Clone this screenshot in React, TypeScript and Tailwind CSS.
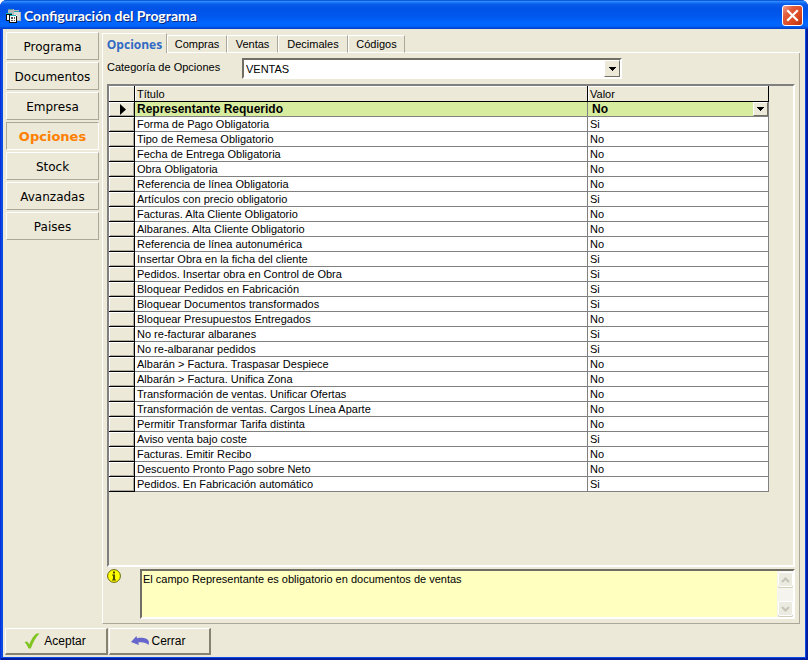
import { useState } from "react";

const sections = ["Programa", "Documentos", "Empresa", "Opciones", "Stock", "Avanzadas", "Paises"];

const tabs = [
  { name: "Opciones", width: "w-[65px]" },
  { name: "Compras", width: "w-[60px]" },
  { name: "Ventas", width: "w-[51px]" },
  { name: "Decimales", width: "w-[70px]" },
  { name: "Códigos", width: "w-[57px]" },
];

const options = [
  ["Representante Requerido", "No"],
  ["Forma de Pago Obligatoria", "Si"],
  ["Tipo de Remesa Obligatorio", "No"],
  ["Fecha de Entrega Obligatoria", "No"],
  ["Obra Obligatoria", "No"],
  ["Referencia de línea Obligatoria", "No"],
  ["Artículos con precio obligatorio", "Si"],
  ["Facturas. Alta Cliente Obligatorio", "No"],
  ["Albaranes. Alta Cliente Obligatorio", "No"],
  ["Referencia de línea autonumérica", "No"],
  ["Insertar Obra en la ficha del cliente", "Si"],
  ["Pedidos. Insertar obra en Control de Obra", "Si"],
  ["Bloquear Pedidos en Fabricación", "Si"],
  ["Bloquear Documentos transformados", "Si"],
  ["Bloquear Presupuestos Entregados", "No"],
  ["No re-facturar albaranes", "Si"],
  ["No re-albaranar pedidos", "Si"],
  ["Albarán > Factura. Traspasar Despiece", "No"],
  ["Albarán > Factura. Unifica Zona", "No"],
  ["Transformación de ventas. Unificar Ofertas", "No"],
  ["Transformación de ventas. Cargos Línea Aparte", "No"],
  ["Permitir Transformar Tarifa distinta", "No"],
  ["Aviso venta bajo coste", "Si"],
  ["Facturas. Emitir Recibo", "No"],
  ["Descuento Pronto Pago sobre Neto", "No"],
  ["Pedidos. En Fabricación automático", "Si"],
];

function TitleBar() {
  return (
    <header className="flex h-[29px] shrink-0 items-center rounded-t-[7px] bg-[linear-gradient(180deg,#0040c8_0%,#2b8cff_5%,#0a5cec_14%,#0053e6_30%,#0057ee_55%,#0066ff_80%,#0064fa_90%,#0046d2_97%,#003dc4_100%)] pt-[2px] pr-[5px] pl-[6px]">
      <svg width="16" height="16" viewBox="0 0 16 16" shapeRendering="crispEdges" aria-hidden="true">
        <path d="M2 1h6v1h5v2h2v9H8L2 8z" fill="#b4b8b8" />
        <path d="M2 1h5v1H2z" fill="#4f9c9c" />
        <path d="M8 3h5v1H8z" fill="#38a0a8" />
        <path d="M8 4h6v8H8z" fill="#d8dcd8" />
        <path d="M1 5h5v2h5v8H4v-2H1z" fill="#fff" />
        <path d="M0 5h6v1H0zM4 7h6v1H4z" fill="#12b8b8" />
        <path d="M0 6h1v7H0zM1 12h3v1H1zM3 7h1v8H3zM4 14h7v1H4zM10 8h1v6h-1zM1 6h5v1H1z" fill="#111" />
        <path d="M5 9h2v2H5zM8 9h1v2H8zM5 12h2v1H5zM8 12h1v1H8z" fill="#555" />
      </svg>
      <h1 className="ml-[2px] flex-1 font-[Lato,sans-serif] text-[14px] leading-4 font-bold text-white [text-shadow:1px_1px_0_#0a2a80]">
        Configuración del Programa
      </h1>
      <button
        type="button"
        aria-label="Cerrar ventana"
        className="flex h-[21px] w-[21px] items-center justify-center rounded-[3px] border border-white bg-[linear-gradient(135deg,#f0a090_0%,#e25c3c_30%,#dc4a20_65%,#b83010_100%)]"
      >
        <svg width="13" height="13" viewBox="0 0 13 13" aria-hidden="true">
          <path d="M2 2l9 9M11 2l-9 9" stroke="#fff" strokeWidth="2.2" strokeLinecap="square" />
        </svg>
      </button>
    </header>
  );
}

function DropArrow() {
  return (
    <svg width="7" height="4" viewBox="0 0 7 4" shapeRendering="crispEdges" aria-hidden="true">
      <path d="M0 0h7v1H0zM1 1h5v1H1zM2 2h3v1H2zM3 3h1v1H3z" fill="#000" />
    </svg>
  );
}

function OptionsTable() {
  return (
    <table className="w-full table-fixed border-separate border-spacing-0 text-left text-[11px] leading-[14px]">
      <colgroup>
        <col className="w-[26px]" />
        <col />
        <col className="w-[181px]" />
      </colgroup>
      <thead>
        <tr className="h-4">
          <th aria-label="Fila" className="border-r border-b border-black p-0 shadow-[inset_1px_1px_0_#fff]" />
          <th className="border-r border-b border-black p-0 pl-[2px] font-normal shadow-[inset_1px_1px_0_#fff]">Título</th>
          <th className="border-r border-b border-black p-0 pl-[2px] font-normal shadow-[inset_1px_1px_0_#fff]">Valor</th>
        </tr>
      </thead>
      <tbody>
        {options.map(([title, value], i) => (
          <tr key={title} className={i === 0 ? "h-[15px] bg-[#d8eca0] text-[12px] font-bold" : "h-[15px] bg-white"}>
            <td className="border-r border-b border-black bg-[#ece9d8] p-0 shadow-[inset_1px_1px_0_#fff,inset_-1px_-1px_0_#aca899]">
              {i === 0 && (
                <svg className="ml-[11px] block" width="6" height="11" viewBox="0 0 6 11" aria-hidden="true">
                  <path d="M0 0l6 5.500L0 11z" fill="#000" />
                </svg>
              )}
            </td>
            <td className="overflow-hidden border-r border-b border-[#808080] p-0 pl-[2px] whitespace-nowrap">{title}</td>
            <td className="border-r border-b border-[#808080] p-0 pl-[2px]">
              {i === 0 ? (
                <div className="relative">
                  <select
                    aria-label={title}
                    defaultValue={value}
                    className="block h-[14px] w-full appearance-none pl-[2px] text-[12px] leading-[14px] font-bold outline-none"
                  >
                    <option>No</option>
                    <option>Si</option>
                  </select>
                  <span className="pointer-events-none absolute top-0 right-0 flex h-[14px] w-[15px] items-center justify-center border border-t-white border-r-[#716f64] border-b-[#716f64] border-l-white bg-[#ece9d8]">
                    <DropArrow />
                  </span>
                </div>
              ) : (
                value
              )}
            </td>
          </tr>
        ))}
      </tbody>
    </table>
  );
}

function ScrollButton({ label, path }: { label: string; path: string }) {
  return (
    <button
      type="button"
      aria-label={label}
      className="flex h-[15px] w-[15px] items-center justify-center rounded-[2px] border border-white bg-[#ecebe2] shadow-[0_1px_0_#cfccb8]"
    >
      <svg width="9" height="6" viewBox="0 0 9 6" fill="none" aria-hidden="true">
        <path d={path} stroke="#c6c4b6" strokeWidth="2" />
      </svg>
    </button>
  );
}

export default function App() {
  const [section, setSection] = useState("Opciones");
  const [tab, setTab] = useState("Opciones");

  return (
    <div className="bg-white font-['Liberation_Sans',Arial,sans-serif] text-[11px] text-black">
      <div className="flex min-h-screen flex-col rounded-t-[7px] bg-[#0a4ae4] shadow-[inset_1px_0_0_#0831d9,inset_-2px_-2px_0_#001da0]">
        <TitleBar />
        <div className="mx-[3px] mb-[3px] flex flex-1 flex-col bg-[#ece9d8]">
          <div className="flex flex-1 pt-[3px] pr-[5px] pl-[3px]">
            <nav className="flex w-[93px] shrink-0 flex-col gap-[2px]">
              {sections.map((name) => (
                <button
                  key={name}
                  type="button"
                  onClick={() => setSection(name)}
                  className={
                    name === section
                      ? "h-[28px] border border-t-[#aca899] border-r-white border-b-white border-l-[#aca899] pt-px font-['DejaVu_Sans',sans-serif] text-[13px] font-bold text-[#ff8000]"
                      : "h-[28px] border border-t-white border-r-[#aca899] border-b-[#aca899] border-l-white pt-px font-['DejaVu_Sans',sans-serif] text-[12px]"
                  }
                >
                  {name}
                </button>
              ))}
            </nav>

            <main className="ml-[3px] flex min-w-0 flex-1 flex-col pt-[1px]">
              <div role="tablist" className="flex h-[20px] items-end">
                {tabs.map((t) => (
                  <button
                    key={t.name}
                    type="button"
                    role="tab"
                    aria-selected={t.name === tab}
                    onClick={() => setTab(t.name)}
                    className={
                      t.name === tab
                        ? `${t.width} h-[20px] border-t border-r border-l border-t-white border-r-[#aca899] border-l-white pt-[2px] font-['Open_Sans',sans-serif] text-[12px] leading-[16px] font-bold text-[#316ac5]`
                        : `${t.width} h-[18px] border-t border-r border-b border-l border-t-white border-r-[#aca899] border-b-white border-l-white pt-px text-[11px] leading-[15px]`
                    }
                  >
                    {t.name}
                  </button>
                ))}
                <div className="h-px flex-1 bg-white" />
              </div>

              <div className="flex flex-1 flex-col border-r border-b border-l border-r-[#aca899] border-b-[#aca899] border-l-white pt-[5px] pr-1 pb-1 pl-1">
                <div className="flex h-[21px]">
                  <label htmlFor="category" className="w-[135px] pt-[2px] leading-[14px]">
                    Categoría de Opciones
                  </label>
                  <div className="relative w-[380px] border-2 border-t-[#716f64] border-r-white border-b-white border-l-[#716f64] bg-white">
                    <select id="category" className="block h-[17px] w-full appearance-none pt-px pl-[2px] text-[11px] leading-[16px] outline-none">
                      <option>VENTAS</option>
                    </select>
                    <span className="pointer-events-none absolute top-0 right-0 flex h-[17px] w-[16px] items-center justify-center border border-t-white border-r-[#716f64] border-b-[#716f64] border-l-white bg-[#ece9d8]">
                      <DropArrow />
                    </span>
                  </div>
                </div>

                <div className="mt-[5px] flex-1 border-2 border-t-[#808080] border-r-white border-b-white border-l-[#808080] pr-[24px]">
                  <OptionsTable />
                </div>

                <div className="mt-[2px] flex h-[50px]">
                  <svg className="shrink-0" width="14" height="14" viewBox="0 0 14 14" role="img" aria-label="Información">
                    <circle cx="7" cy="7" r="6.400" fill="#ff0" stroke="#66660a" />
                    <path d="M6 2.500h2v2H6zM5 5.500h3v5h1v1H5v-1h1v-4H5z" fill="#4a4a00" />
                  </svg>
                  <div className="ml-[19px] flex flex-1 border-2 border-t-[#716f64] border-r-white border-b-white border-l-[#716f64] bg-[#ffffc0]">
                    <textarea
                      readOnly
                      aria-label="Descripción"
                      className="block flex-1 resize-none overflow-hidden pt-px pl-[1px] leading-[14px] outline-none"
                      defaultValue="El campo Representante es obligatorio en documentos de ventas"
                    />
                    <div className="flex w-[16px] flex-col items-center justify-between bg-[#f5f4ef] pt-px pb-px">
                      <ScrollButton label="Subir" path="M1 5l3.500-3.500L8 5" />
                      <ScrollButton label="Bajar" path="M1 1l3.500 3.500L8 1" />
                    </div>
                  </div>
                </div>
              </div>
            </main>
          </div>

          <footer className="flex gap-px pt-1 pb-[2px] pl-[2px] text-[12px]">
            <button
              type="button"
              className="flex h-[27px] w-[103px] items-center justify-center gap-1 border-t border-r-2 border-b-2 border-l border-t-white border-r-[#858272] border-b-[#858272] border-l-white pr-[2px]"
            >
              <svg width="16" height="16" viewBox="0 0 16 16" aria-hidden="true">
                <path d="M.5 9l2.500-.5c1 .8 1.700 1.800 2.200 3C7 7 9.500 2.500 12.500.5H15.500C11.500 4.500 9 9.500 6.800 15.500H4.500C3.500 13 2.300 11 .5 9z" fill="#7fc41f" />
              </svg>
              Aceptar
            </button>
            <button
              type="button"
              className="flex h-[27px] w-[102px] items-center justify-center gap-[2px] border-t border-r-2 border-b-2 border-l border-t-white border-r-[#858272] border-b-[#858272] border-l-white pr-[2px]"
            >
              <svg width="18" height="10" viewBox="0 0 18 10" aria-hidden="true">
                <path d="M0 6L5.500 0l.5 2.200c6-1 11 .3 12 3.800l-.5 3C15 6.300 11 5.800 7.200 6.500l.8 2.500z" fill="#6666cc" />
              </svg>
              Cerrar
            </button>
          </footer>
        </div>
      </div>
    </div>
  );
}
